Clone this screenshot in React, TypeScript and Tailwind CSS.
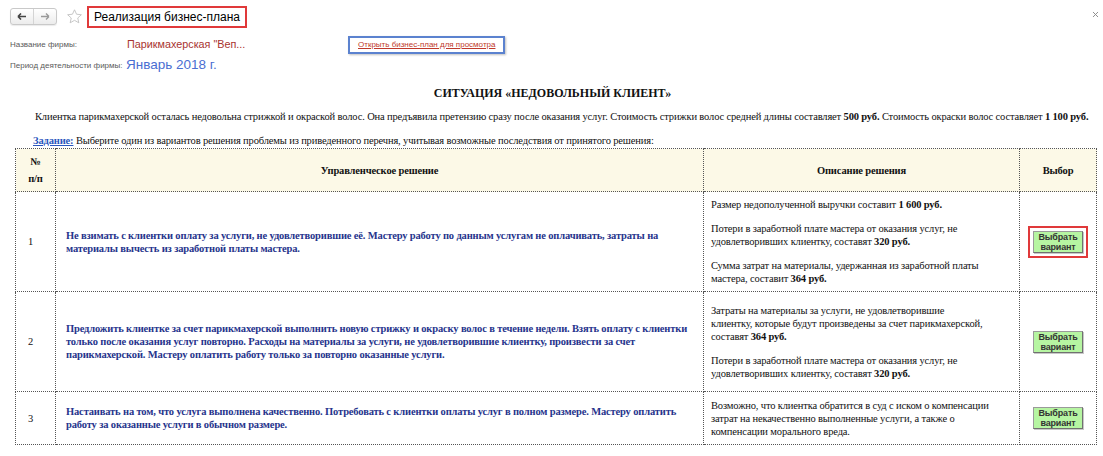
import { X } from "lucide-react";

const serif = { fontFamily: '"Liberation Serif", "Times New Roman", serif' };

type Row = {
  n: string;
  decision: string;
  desc: React.ReactNode;
  h: string;
  marked?: boolean;
};

function ChooseButton({ marked }: { marked?: boolean }) {
  const btn = (
    <button className="w-[50px] h-[22px] bg-[#b6f5a2] border border-[#9a9a9a] border-b-[#707070] border-r-[#707070] shadow-[1px_1px_0_#c8c8c8] font-['Liberation_Sans',Arial,sans-serif] text-[9px] leading-[10px] font-bold text-[#333]">
      Выбрать
      <br />
      вариант
    </button>
  );
  if (!marked) return btn;
  return <div className="p-[3px] border-2 border-[#e0393a]">{btn}</div>;
}

const rows: Row[] = [
  {
    n: "1",
    h: "h-[100px]",
    marked: true,
    decision:
      "Не взимать с клиентки оплату за услуги, не удовлетворившие её. Мастеру работу по данным услугам не оплачивать, затраты на материалы вычесть из заработной платы мастера.",
    desc: (
      <>
        <p>
          Размер недополученной выручки составит <b>1 600 руб.</b>
        </p>
        <p className="mt-[11px]">
          Потери в заработной плате мастера от оказания услуг, не удовлетворивших клиентку, составят <b>320 руб.</b>
        </p>
        <p className="mt-[11px]">
          Сумма затрат на материалы, удержанная из заработной платы мастера, составит <b>364 руб.</b>
        </p>
      </>
    ),
  },
  {
    n: "2",
    h: "h-[100px]",
    decision:
      "Предложить клиентке за счет парикмахерской выполнить новую стрижку и окраску волос в течение недели. Взять оплату с клиентки только после оказания услуг повторно. Расходы на материалы за услуги, не удовлетворившие клиентку, произвести за счет парикмахерской. Мастеру оплатить работу только за повторно оказанные услуги.",
    desc: (
      <>
        <p>
          Затраты на материалы за услуги, не удовлетворившие
          <br />
          клиентку, которые будут произведены за счет парикмахерской,
          <br />
          составят <b>364 руб.</b>
        </p>
        <p className="mt-[11px]">
          Потери в заработной плате мастера от оказания услуг, не удовлетворивших клиентку, составят <b>320 руб.</b>
        </p>
      </>
    ),
  },
  {
    n: "3",
    h: "h-[53px]",
    decision:
      "Настаивать на том, что услуга выполнена качественно. Потребовать с клиентки оплаты услуг в полном размере. Мастеру оплатить работу за оказанные услуги в обычном размере.",
    desc: (
      <p>
        Возможно, что клиентка обратится в суд с иском о компенсации затрат на некачественно выполненные услуги, а также о компенсации морального вреда.
      </p>
    ),
  },
];

export default function App() {
  return (
    <div className="w-[1103px] h-[456px] bg-white overflow-hidden relative font-['Liberation_Sans',Arial,sans-serif]">
      {/* top bar */}
      <div className="h-[34px] flex items-start pt-[6px] pl-[10px]">
        <div className="mt-[2px] flex h-[17px] w-[47px] rounded-[3px] border border-[#c9c9c9] bg-gradient-to-b from-white to-[#ececec] shadow-[0_1px_1px_rgba(0,0,0,0.08)]">
          <div className="flex-1 flex items-center justify-center border-r border-[#d4d4d4]">
            <svg width="10" height="7" viewBox="0 0 10 7">
              <path d="M1 3.5h8M1 3.5l3-3M1 3.5l3 3" stroke="#444" strokeWidth="1.6" fill="none" />
            </svg>
          </div>
          <div className="flex-1 flex items-center justify-center">
            <svg width="10" height="7" viewBox="0 0 10 7">
              <path d="M1 3.5h8M9 3.5l-3-3M9 3.5l-3 3" stroke="#9a9a9a" strokeWidth="1.4" fill="none" />
            </svg>
          </div>
        </div>
        <svg className="ml-[9px] mt-[2px]" width="17" height="17" viewBox="0 0 24 24">
          <path
            d="M12 2.5l2.9 6.3 6.8.7-5.1 4.6 1.5 6.8L12 17.4l-6.1 3.5 1.5-6.8-5.1-4.6 6.8-.7z"
            fill="none"
            stroke="#bdbdbd"
            strokeWidth="1.2"
            strokeLinejoin="round"
          />
        </svg>
        <div className="ml-[4px] h-[22px] px-[5px] border-2 border-[#e0393a] flex items-center text-[12px] text-black">
          Реализация бизнес-плана
        </div>
      </div>
      <X className="absolute right-[3px] top-[10px] text-[#8a8a8a]" size={9} strokeWidth={2.5} />

      {/* firm name */}
      <div className="h-[21px] flex items-center pl-[10px]">
        <span className="w-[117px] text-[8px] text-[#5a5a5a] whitespace-nowrap">Название фирмы:</span>
        <span className="w-[221px] text-[10.8px] text-[#a8332f] whitespace-nowrap">Парикмахерская "Веп...</span>
        <div className="h-[18px] px-[8px] flex items-center border-2 border-[#5b82cf] shadow-[1px_1px_2px_rgba(0,0,0,0.25)]">
          <a className="text-[8px] text-[#c0392b] underline whitespace-nowrap">Открыть бизнес-план для просмотра</a>
        </div>
      </div>

      {/* period */}
      <div className="h-[21px] flex items-center pl-[10px]">
        <span className="w-[116px] text-[8px] text-[#5a5a5a] whitespace-nowrap">Период деятельности фирмы:</span>
        <span className="text-[13.5px] text-[#4a6ed2] whitespace-nowrap">Январь 2018 г.</span>
      </div>

      <div style={serif} className="text-[#111]">
        <h1 className="mt-[9px] h-[16px] leading-[16px] text-center text-[12px] font-bold pl-[2px]">
          СИТУАЦИЯ «НЕДОВОЛЬНЫЙ КЛИЕНТ»
        </h1>
        <p className="mt-[8px] h-[16px] leading-[16px] pl-[35px] text-[10.5px] tracking-[-0.15px] whitespace-nowrap">
          Клиентка парикмахерской осталась недовольна стрижкой и окраской волос. Она предъявила претензию сразу после
          оказания услуг. Стоимость стрижки волос средней длины составляет <b>500 руб.</b> Стоимость окраски волос
          составляет <b>1 100 руб.</b>
        </p>
        <p className="mt-[9px] h-[14px] leading-[14px] pl-[33px] text-[10.5px] tracking-[-0.15px] whitespace-nowrap">
          <b className="text-[#2a56bd] underline">Задание:</b> Выберите один из вариантов решения проблемы из
          приведенного перечня, учитывая возможные последствия от принятого решения:
        </p>

        <table className="ml-[15px] w-[1081px] border-collapse table-fixed text-[10.5px] tracking-[-0.15px] leading-[13px]">
          <colgroup>
            <col className="w-[40px]" />
            <col className="w-[648px]" />
            <col className="w-[316px]" />
            <col className="w-[77px]" />
          </colgroup>
          <thead>
            <tr className="h-[43px] bg-[#fcf9e7] font-bold">
              <th className="border border-dotted border-[#555] text-center leading-[17px]">
                №
                <br />
                п/п
              </th>
              <th className="border border-dotted border-[#555] text-center">Управленческое решение</th>
              <th className="border border-dotted border-[#555] text-center">Описание решения</th>
              <th className="border border-dotted border-[#555] text-center">Выбор</th>
            </tr>
          </thead>
          <tbody>
            {rows.map((r) => (
              <tr key={r.n} className={r.h}>
                <td className="border border-dotted border-[#555] pl-[12px] align-middle">{r.n}</td>
                <td className="border border-dotted border-[#555] px-[10px] align-middle font-bold text-[#26348c]">
                  {r.decision}
                </td>
                <td className="border border-dotted border-[#555] pl-[7px] align-middle text-[#111]">
                  <div className="w-[281px]">{r.desc}</div>
                </td>
                <td className="border border-dotted border-[#555] align-middle">
                  <div className="flex justify-center">
                    <ChooseButton marked={r.marked} />
                  </div>
                </td>
              </tr>
            ))}
          </tbody>
        </table>
      </div>
    </div>
  );
}
